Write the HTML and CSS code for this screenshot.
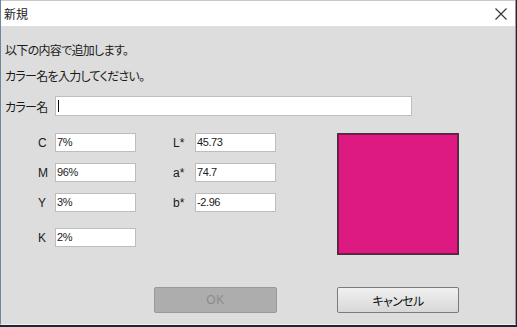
FILE: index.html
```html
<!DOCTYPE html>
<html lang="ja">
<head>
  <meta charset="UTF-8" />
  <title>新規</title>
  <link rel="stylesheet" href="styles.css">
</head>
<body>

  <div class="window">
    <div class="titlebar">
      <span class="title">新規</span>
      <span class="close-btn">
        <svg width="12" height="12" viewBox="0 0 12 12">
          <path d="M0.5 0.5 L11.5 11.5 M11.5 0.5 L0.5 11.5" stroke="#333" stroke-width="1.1" fill="none" />
        </svg>
      </span>
    </div>

    <div class="content">
      <p class="msg">以下の内容で追加します。</p>
      <p class="msg">カラー名を入力してください。</p>

      <div class="name-row">
        <label class="name-label">カラー名</label>
        <div class="name-input"><span class="caret"></span></div>
      </div>

      <div class="main">
        <div class="fields">
          <label class="lbl">C</label>
          <div class="field">7%</div>
          <label class="lbl lab">L*</label>
          <div class="field">45.73</div>

          <label class="lbl">M</label>
          <div class="field">96%</div>
          <label class="lbl lab">a*</label>
          <div class="field">74.7</div>

          <label class="lbl">Y</label>
          <div class="field">3%</div>
          <label class="lbl lab">b*</label>
          <div class="field">-2.96</div>

          <label class="lbl k-row">K</label>
          <div class="field k-row">2%</div>
        </div>

        <div class="swatch"></div>
      </div>

      <div class="buttons">
        <button class="btn" disabled>OK</button>
        <button class="btn">キャンセル</button>
      </div>
    </div>
  </div>

</body>
</html>
```

FILE: styles.css
```css
* {
  box-sizing: border-box;
}
body {
  margin: 0;
  background: #1d2631;
  font-family: "Noto Sans CJK JP", "Liberation Sans", sans-serif;
  font-size: 12px;
  color: #1a1a1a;
  font-feature-settings: "palt";
}
.window {
  width: 516px;
  height: 325px;
  background: #dddddd;
  border-left: 1px solid #6d86a0;
  border-right: 1px solid #9a9a9a;
  border-bottom: 1px solid #eeeeee;
}
.titlebar {
  height: 26px;
  background: #ffffff;
  border-top: 1px solid #c8c8c8;
  display: flex;
  align-items: center;
  justify-content: space-between;
  padding: 0 8px 0 3px;
}
.title {
  font-size: 12px;
  color: #222;
}
.close-btn {
  display: flex;
  margin-top: 1px;
}
.content {
  padding: 11px 0 0 4px;
}
.msg {
  margin: 0;
  height: 26px;
  line-height: 26px;
  letter-spacing: -0.7px;
}
.name-row {
  display: flex;
  align-items: center;
  margin-top: 7px;
}
.name-label {
  width: 50px;
  padding-top: 1px;
  letter-spacing: -0.7px;
}
.name-input {
  width: 357px;
  height: 20px;
  background: #fff;
  border: 1px solid #bdbdbd;
  padding: 3px 0 0 2px;
}
.caret {
  display: block;
  width: 1px;
  height: 12px;
  background: #111;
}
.main {
  display: flex;
  align-items: flex-start;
  margin-top: 17px;
  gap: 61px;
}
.fields {
  display: grid;
  grid-template-columns: 50px 81px 59px 81px;
  row-gap: 11px;
  align-items: center;
}
.lbl {
  padding-left: 33px;
  font-family: "Liberation Sans", sans-serif;
  font-size: 12px;
}
.lbl.lab {
  padding-left: 37px;
}
.field {
  height: 19px;
  background: #fff;
  border: 1px solid #bdbdbd;
  font-family: "Liberation Sans", sans-serif;
  font-size: 11px;
  letter-spacing: -0.4px;
  line-height: 17px;
  padding-left: 1px;
}
.k-row {
  margin-top: 5px;
}
.swatch {
  width: 122px;
  height: 122px;
  background: #dd1a81;
  border: 1px solid #3a3a3a;
  box-shadow: inset 0 0 0 1px #8c1050;
}
.buttons {
  display: flex;
  gap: 60px;
  margin-top: 32px;
  padding-left: 149px;
}
.btn {
  height: 26px;
  width: 123px;
  font-family: "Noto Sans CJK JP", "Liberation Sans", sans-serif;
  font-size: 12px;
  font-feature-settings: "palt";
  letter-spacing: -0.6px;
  color: #111;
  border: 1px solid #7a7a7a;
  border-radius: 2px;
  background: linear-gradient(#f0f0f0, #d8d8d8);
  padding: 0;
}
.btn:disabled {
  background: #adadad;
  border-color: #999;
  color: #8c8c8c;
  font-family: "Liberation Sans", sans-serif;
  letter-spacing: 0.5px;
}
.btn + .btn {
  width: 122px;
}
```
